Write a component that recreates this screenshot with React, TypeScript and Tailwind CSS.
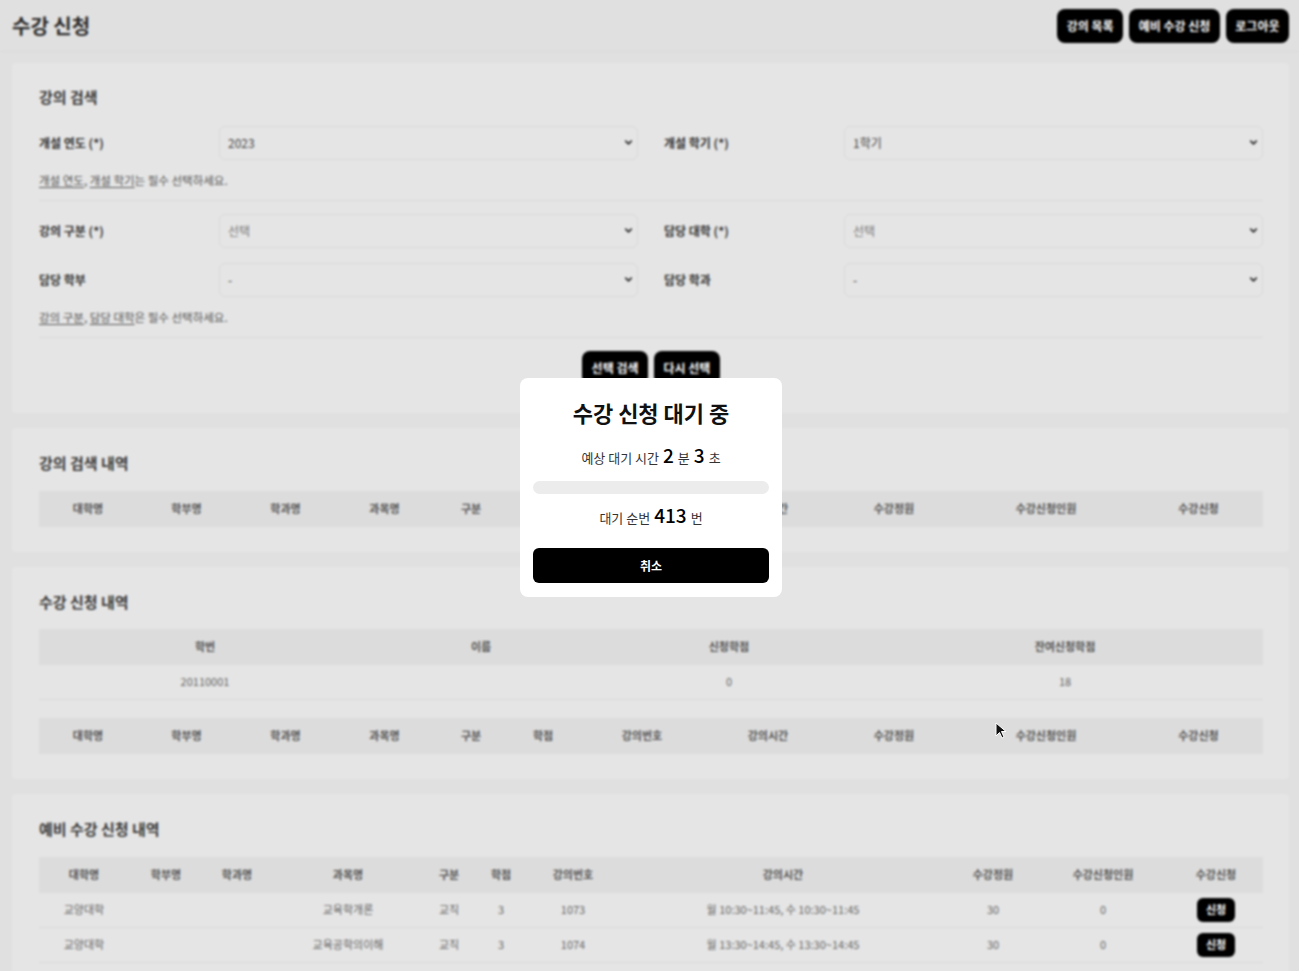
import React from "react";

const font = { fontFamily: '"Noto Sans CJK KR", "Noto Sans", sans-serif' };

function Chevron() {
  return (
    <svg width="11" height="11" viewBox="0 0 24 24" fill="none" stroke="#333" strokeWidth="4" strokeLinecap="round" strokeLinejoin="round">
      <path d="M6 9l6 6 6-6" />
    </svg>
  );
}

function Select({ value, light }: { value: string; light?: boolean }) {
  return (
    <div className="flex h-[34px] w-[419px] items-center justify-between rounded-md border border-[#dadada] bg-[#e5e5e5] pl-[8px] pr-[3px]">
      <span className={`text-[12px] ${light ? "text-[#7a7a7a]" : "text-[#444]"}`}>{value}</span>
      <Chevron />
    </div>
  );
}

function Field({ label, value, light }: { label: string; value: string; light?: boolean }) {
  return (
    <div className="flex w-[599px] items-center">
      <div className="w-[180px] text-[12px] font-bold text-[#333]">{label}</div>
      <Select value={value} light={light} />
    </div>
  );
}

function Card({ title, children, className }: { title: string; children?: React.ReactNode; className?: string }) {
  return (
    <div className={`ml-[12px] mr-[10px] rounded-sm bg-[#e5e5e5] pl-[27px] pr-[26px] ${className ?? ""}`}>
      <div className="text-[15px] font-bold text-[#3a3a3a]">{title}</div>
      {children}
    </div>
  );
}

const mainCols = ["대학명", "학부명", "학과명", "과목명", "구분", "학점", "강의번호", "강의시간", "수강정원", "수강신청인원", "수강신청"];
const mainGrid = "grid grid-cols-[98px_99px_99px_99px_74px_70px_128px_124px_128px_176px_129px]";

function HeaderRow({ cols, grid }: { cols: string[]; grid: string }) {
  return (
    <div className={`${grid} h-[36px] items-center bg-[#dcdcdc] text-center text-[11px] font-bold text-[#555]`}>
      {cols.map((c, i) => (
        <div key={i}>{c}</div>
      ))}
    </div>
  );
}

const prepGrid = "grid grid-cols-[90px_74px_68px_154px_48px_56px_88px_332px_88px_132px_94px]";

const prepRows = [
  ["교양대학", "", "", "교육학개론", "교직", "3", "1073", "월 10:30~11:45, 수 10:30~11:45", "30", "0"],
  ["교양대학", "", "", "교육공학의이해", "교직", "3", "1074", "월 13:30~14:45, 수 13:30~14:45", "30", "0"],
];

function BlackBtn({ children }: { children: React.ReactNode }) {
  return (
    <div className="flex h-[34px] items-center rounded-lg bg-black px-[9.5px] text-[12px] font-bold text-white">{children}</div>
  );
}

export default function App() {
  return (
    <div style={font} className="relative min-h-[971px] bg-[#e0e0e0] pb-[40px]">
      {/* Header */}
      <div className="flex h-[52px] items-center justify-between border-b border-[#dadada] pl-[12px] pr-[10px]">
        <div className="text-[20px] font-bold text-[#2a2a2a]">수강 신청</div>
        <div className="flex gap-[6px]">
          <BlackBtn>강의 목록</BlackBtn>
          <BlackBtn>예비 수강 신청</BlackBtn>
          <BlackBtn>로그아웃</BlackBtn>
        </div>
      </div>

      <div className="mt-[11px] flex flex-col gap-[15px]">
        {/* Search */}
        <Card title="강의 검색" className="h-[350px] pt-[23px]">
          <div className="mt-[17px] flex justify-between">
            <Field label="개설 연도 (*)" value="2023" />
            <Field label="개설 학기 (*)" value="1학기" />
          </div>
          <div className="mt-[12px] text-[11.5px] text-[#555]">
            <span className="underline underline-offset-2">개설 연도</span>, <span className="underline underline-offset-2">개설 학기</span>는 필수 선택하세요.
          </div>
          <div className="mt-[11px] border-t border-[#dadada]" />
          <div className="mt-[13px] flex justify-between">
            <Field label="강의 구분 (*)" value="선택" light />
            <Field label="담당 대학 (*)" value="선택" light />
          </div>
          <div className="mt-[15px] flex justify-between">
            <Field label="담당 학부" value="-" />
            <Field label="담당 학과" value="-" />
          </div>
          <div className="mt-[12px] text-[11.5px] text-[#555]">
            <span className="underline underline-offset-2">강의 구분</span>, <span className="underline underline-offset-2">담당 대학</span>은 필수 선택하세요.
          </div>
          <div className="mt-[11px] border-t border-[#dadada]" />
          <div className="mt-[13px] flex justify-center gap-[6px]">
            <BlackBtn>선택 검색</BlackBtn>
            <BlackBtn>다시 선택</BlackBtn>
          </div>
        </Card>

        {/* Search results */}
        <Card title="강의 검색 내역" className="h-[124px] pt-[24px]">
          <div className="mt-[16px]">
            <HeaderRow cols={mainCols} grid={mainGrid} />
          </div>
        </Card>

        {/* Registration */}
        <Card title="수강 신청 내역" className="h-[212px] pt-[24px]">
          <div className="mt-[15px]">
            <HeaderRow cols={["학번", "이름", "신청학점", "잔여신청학점"]} grid="grid grid-cols-[332px_220px_276px_396px]" />
            <div className="grid h-[35px] grid-cols-[332px_220px_276px_396px] items-center border-b border-[#d8d8d8] text-center text-[11px] text-[#666]">
              <div>20110001</div>
              <div></div>
              <div>0</div>
              <div>18</div>
            </div>
          </div>
          <div className="mt-[18px]">
            <HeaderRow cols={mainCols} grid={mainGrid} />
          </div>
        </Card>

        {/* Prep registration */}
        <Card title="예비 수강 신청 내역" className="pb-[20px] pt-[24px]">
          <div className="mt-[16px]">
            <HeaderRow cols={mainCols} grid={prepGrid} />
            {prepRows.map((r, i) => (
              <div key={i} className={`${prepGrid} h-[35px] items-center border-b border-[#d8d8d8] text-center text-[11px] text-[#666]`}>
                {r.map((c, j) => (
                  <div key={j}>{c}</div>
                ))}
                <div className="flex justify-center">
                  <div className="flex h-[24px] items-center rounded-md bg-black px-[9px] text-[11px] font-bold text-white">신청</div>
                </div>
              </div>
            ))}
          </div>
        </Card>
      </div>

      {/* Overlay */}
      <div className="fixed inset-0 backdrop-blur-[1px]">
        <div className="absolute left-[520px] top-[378px] w-[262px] rounded-lg bg-white px-[13px] pb-[14px] pt-[18px] text-center">
          <div className="text-[22px] font-bold text-[#111]">수강 신청 대기 중</div>
          <div className="mt-[12px] flex items-baseline justify-center gap-[4px] text-[13px] text-[#333]">
            <span>예상 대기 시간</span>
            <span className="text-[19px] font-medium text-black">2</span>
            <span>분</span>
            <span className="text-[19px] font-medium text-black">3</span>
            <span>초</span>
          </div>
          <div className="mt-[11px] h-[13px] w-full rounded-full bg-[#ececec]" />
          <div className="mt-[7px] flex items-baseline justify-center gap-[4px] text-[13px] text-[#333]">
            <span>대기 순번</span>
            <span className="text-[19px] font-medium text-black">413</span>
            <span>번</span>
          </div>
          <div className="mt-[19px] flex h-[35px] items-center justify-center rounded-md bg-black text-[12px] font-bold text-white">취소</div>
        </div>
        <svg className="absolute left-[995px] top-[722px]" width="12" height="18" viewBox="0 0 12 18">
          <path d="M1 1 L1 14 L4.5 10.5 L7 16 L9 15 L6.5 9.5 L11 9.5 Z" fill="#111" stroke="#fff" strokeWidth="1" />
        </svg>
      </div>
    </div>
  );
}
